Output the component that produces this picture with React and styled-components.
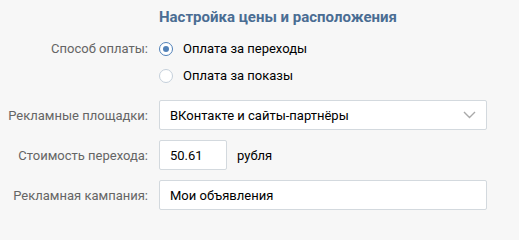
import React from "react";
import styled, { createGlobalStyle } from "styled-components";

const GlobalStyle = createGlobalStyle`
  html, body {
    margin: 0;
    padding: 0;
    background: #f7f7f7;
  }
  body {
    font-family: Roboto, "Liberation Sans", sans-serif;
    font-size: 13px;
    color: #000;
  }
`;

const Page = styled.div`
  width: 519px;
  height: 224px;
  background: #f7f7f7;
  padding-top: 7px;
  box-sizing: border-box;
`;

const Heading = styled.div`
  margin: 0 0 8px 159px;
  font-size: 15px;
  line-height: 20px;
  font-weight: 700;
  color: #4a6d93;
`;

const Row = styled.div`
  display: grid;
  grid-template-columns: 148px 328px;
  column-gap: 11px;
  align-items: center;
  height: ${(p) => p.$h || 30}px;
  margin-top: ${(p) => p.$mt || 0}px;
`;

const Label = styled.div`
  text-align: right;
  color: #656565;
  font-size: 13px;
`;

const Radio = styled.label`
  display: flex;
  align-items: center;
  gap: 10px;
  font-size: 13px;
  color: #000;
  cursor: pointer;
`;

const RadioMark = styled.span`
  width: 14px;
  height: 14px;
  box-sizing: border-box;
  border-radius: 50%;
  border: 1px solid ${(p) => (p.$checked ? "#5181b8" : "#c5d0db")};
  background: #fff;
  display: flex;
  align-items: center;
  justify-content: center;
  &::after {
    content: "";
    width: 6px;
    height: 6px;
    border-radius: 50%;
    background: ${(p) => (p.$checked ? "#5181b8" : "transparent")};
  }
`;

const Box = styled.div`
  height: 30px;
  box-sizing: border-box;
  width: ${(p) => (p.$w ? `${p.$w}px` : "100%")};
  border: 1px solid #d3d9de;
  border-radius: 2px;
  background: #fff;
  padding: 0 10px;
  display: flex;
  align-items: center;
  justify-content: space-between;
  font-size: 13px;
  color: #000;
`;

const Inline = styled.div`
  display: flex;
  align-items: center;
  gap: 10px;
`;

const Unit = styled.span`
  font-size: 13px;
  color: #000;
`;

const Chevron = () => (
  <svg width="13" height="8" viewBox="0 0 13 8">
    <polyline
      points="1,1 6.5,6.5 12,1"
      fill="none"
      stroke="#a9a9a9"
      strokeWidth="1.4"
    />
  </svg>
);

export default function App() {
  return (
    <Page>
      <GlobalStyle />
      <Heading>Настройка цены и расположения</Heading>
      <Row $h={27}>
        <Label>Способ оплаты:</Label>
        <Radio>
          <RadioMark $checked />
          Оплата за переходы
        </Radio>
      </Row>
      <Row $h={27}>
        <span />
        <Radio>
          <RadioMark />
          Оплата за показы
        </Radio>
      </Row>
      <Row $mt={11}>
        <Label>Рекламные площадки:</Label>
        <Box>
          ВКонтакте и сайты-партнёры
          <Chevron />
        </Box>
      </Row>
      <Row $mt={10}>
        <Label>Стоимость перехода:</Label>
        <Inline>
          <Box $w={68}>50.61</Box>
          <Unit>рубля</Unit>
        </Inline>
      </Row>
      <Row $mt={10}>
        <Label>Рекламная кампания:</Label>
        <Box>Мои объявления</Box>
      </Row>
    </Page>
  );
}
